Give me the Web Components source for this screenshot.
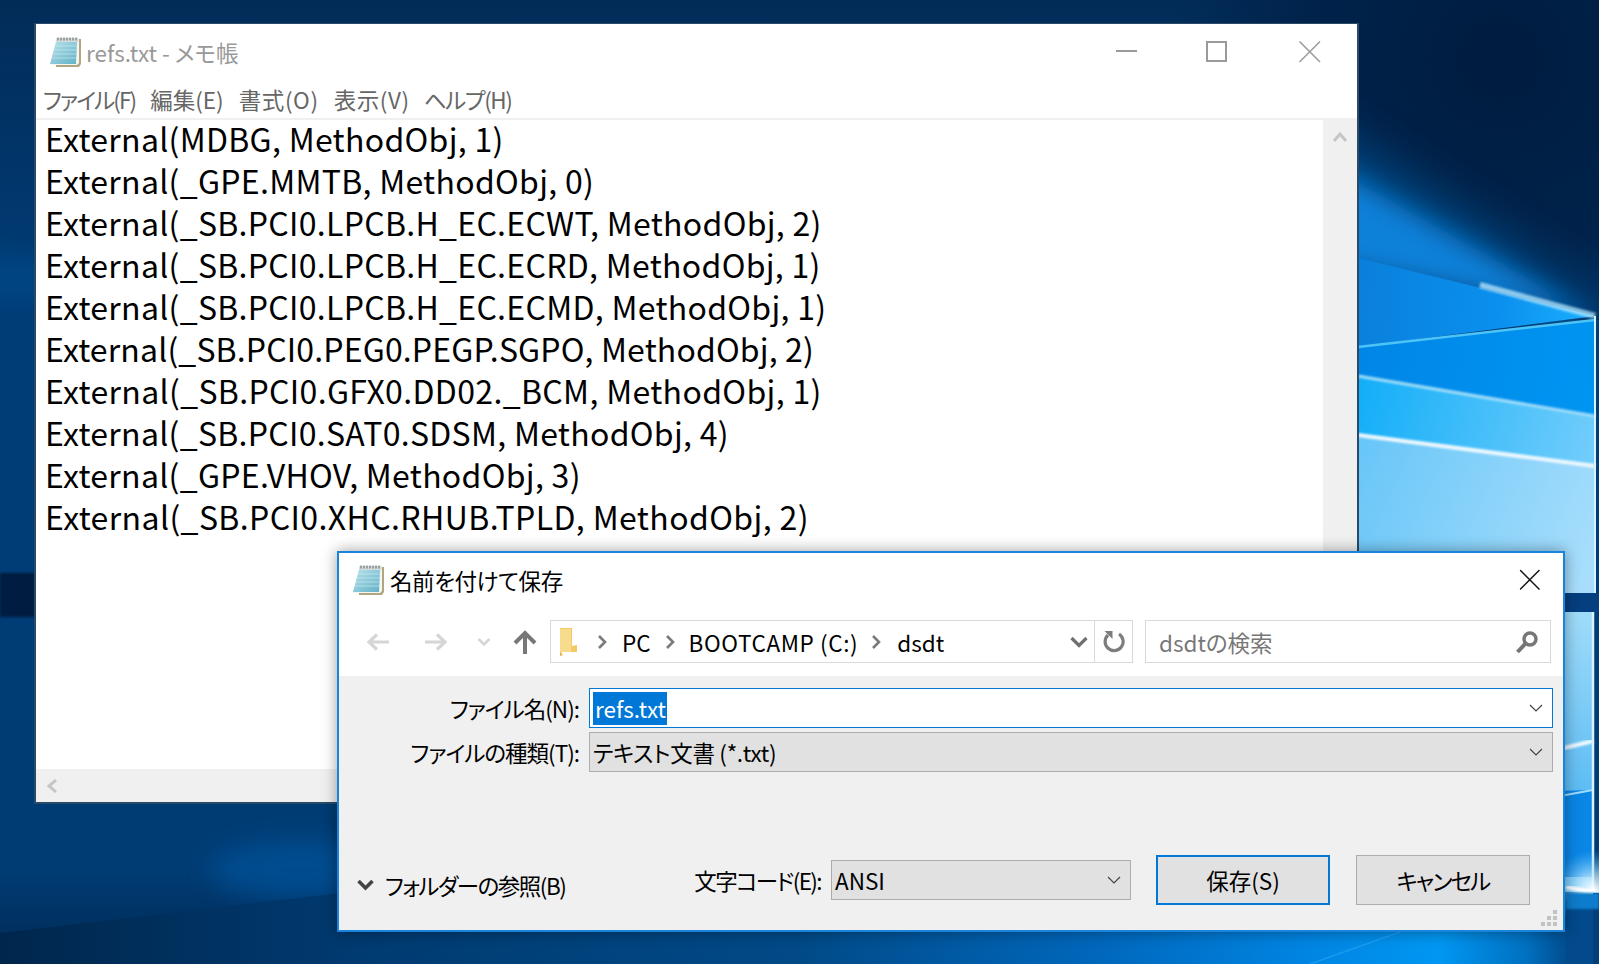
<!DOCTYPE html>
<html lang="ja">
<head>
<meta charset="utf-8">
<title>refs.txt</title>
<style>
  html, body { margin: 0; height: 100%; overflow: hidden; background: #003a72; }
  body { font-family: "Noto Sans CJK JP", "Noto Sans", sans-serif; font-feature-settings: "palt"; }
</style>
</head>
<body>

<hero-desktop>
  <notepad-window slot="windows">
    <code-line>External(MDBG, MethodObj, 1)</code-line>
    <code-line>External(_GPE.MMTB, MethodObj, 0)</code-line>
    <code-line>External(_SB.PCI0.LPCB.H_EC.ECWT, MethodObj, 2)</code-line>
    <code-line>External(_SB.PCI0.LPCB.H_EC.ECRD, MethodObj, 1)</code-line>
    <code-line>External(_SB.PCI0.LPCB.H_EC.ECMD, MethodObj, 1)</code-line>
    <code-line style="letter-spacing:.15px">External(_SB.PCI0.PEG0.PEGP.SGPO, MethodObj, 2)</code-line>
    <code-line style="letter-spacing:.35px">External(_SB.PCI0.GFX0.DD02._BCM, MethodObj, 1)</code-line>
    <code-line>External(_SB.PCI0.SAT0.SDSM, MethodObj, 4)</code-line>
    <code-line>External(_GPE.VHOV, MethodObj, 3)</code-line>
    <code-line style="letter-spacing:.4px">External(_SB.PCI0.XHC.RHUB.TPLD, MethodObj, 2)</code-line>
  </notepad-window>
  <save-dialog slot="windows"></save-dialog>
</hero-desktop>

<script>
  // shared icons
  const noteIcon = `
    <svg width="33" height="32" viewBox="0 0 33 32">
      <defs>
        <linearGradient id="pg" x1="0" y1="0" x2="1" y2="1">
          <stop offset="0" stop-color="#b8e2ea"/><stop offset="1" stop-color="#62b2c8"/>
        </linearGradient>
      </defs>
      <path d="M7 31 L30 31 L32 28 L32 3 L29 3 L29 28 L7 28 Z" fill="#b3a67e"/>
      <path d="M7 3 L30 3 L30 27 L28 29 L1 29 Z" fill="#f4f6f4"/>
      <path d="M7 6 L28 6 L27 28 L1 28 Z" fill="url(#pg)"/>
      <path d="M6 10 H27.5 M5 14 H27.5 M4 18 H27 M3 22 H27" stroke="#d8f0f3" stroke-opacity=".55"/>
      <path d="M7.5 2 H29.5 V6 H7 Z" fill="#d5dadb"/>
      <path d="M9 1.5 v3 M12 1.5 v3 M15 1.5 v3 M18 1.5 v3 M21 1.5 v3 M24 1.5 v3 M27 1.5 v3" stroke="#80898b" stroke-width="1.4"/>
    </svg>`;

  const chevDown = `<svg width="14" height="9" viewBox="0 0 14 9"><path d="M1 1 L7 7 L13 1" fill="none" stroke="#444" stroke-width="1.2"/></svg>`;

  class HeroDesktop extends HTMLElement {
    constructor() {
      super();
      this.attachShadow({ mode: 'open' }).innerHTML = `
        <style>
          :host { display: block; position: relative; width: 1599px; height: 964px; overflow: hidden; }
          svg { display: block; }
        </style>
        <svg width="1599" height="964" viewBox="0 0 1599 964">
          <defs>
            <linearGradient id="base" x1="0" y1="0" x2="0" y2="1">
              <stop offset="0" stop-color="#022c58"/><stop offset=".3" stop-color="#003c76"/>
              <stop offset=".9" stop-color="#003c74"/><stop offset="1" stop-color="#002a55"/>
            </linearGradient>
            <linearGradient id="floor" x1="0" y1="0" x2="1" y2="0">
              <stop offset="0" stop-color="#00264c"/><stop offset=".22" stop-color="#003a70"/>
              <stop offset=".5" stop-color="#014a87"/><stop offset=".69" stop-color="#0068bd"/>
              <stop offset=".81" stop-color="#0083e0"/><stop offset=".9" stop-color="#0097f2"/>
              <stop offset=".955" stop-color="#0070c0"/><stop offset=".98" stop-color="#024d8e"/>
              <stop offset="1" stop-color="#023f78"/>
            </linearGradient>
            <radialGradient id="night" cx="1500" cy="60" r="330" gradientUnits="userSpaceOnUse">
              <stop offset="0" stop-color="#001c3f"/><stop offset=".6" stop-color="#00234b"/>
              <stop offset="1" stop-color="#00234b" stop-opacity="0"/>
            </radialGradient>
            <linearGradient id="paneA" x1="1358" y1="300" x2="1595" y2="316" gradientUnits="userSpaceOnUse">
              <stop offset="0" stop-color="#0a80dc"/><stop offset=".6" stop-color="#0a90ee"/><stop offset="1" stop-color="#1cb0ff"/>
            </linearGradient>
            <linearGradient id="paneB" x1="1358" y1="350" x2="1595" y2="390" gradientUnits="userSpaceOnUse">
              <stop offset="0" stop-color="#0086e6"/><stop offset="1" stop-color="#0095f2"/>
            </linearGradient>
            <linearGradient id="paneC" x1="1358" y1="385" x2="1595" y2="450" gradientUnits="userSpaceOnUse">
              <stop offset="0" stop-color="#12aef8"/><stop offset="1" stop-color="#72cdfb"/>
            </linearGradient>
            <linearGradient id="paneD" x1="1358" y1="450" x2="1595" y2="560" gradientUnits="userSpaceOnUse">
              <stop offset="0" stop-color="#68c6f8"/><stop offset="1" stop-color="#a8defc"/>
            </linearGradient>
            <linearGradient id="paneE" x1="0" y1="612" x2="0" y2="793" gradientUnits="userSpaceOnUse">
              <stop offset="0" stop-color="#a0dcfa"/><stop offset="1" stop-color="#5cbcf4"/>
            </linearGradient>
            <radialGradient id="star" cx="1593" cy="890" r="40" gradientUnits="userSpaceOnUse">
              <stop offset="0" stop-color="#fff"/><stop offset=".4" stop-color="#bfe9ff" stop-opacity=".7"/>
              <stop offset="1" stop-color="#6cc6f8" stop-opacity="0"/>
            </radialGradient>
            <filter id="b30" x="-50%" y="-50%" width="200%" height="200%"><feGaussianBlur stdDeviation="24"/></filter>
            <filter id="b14" x="-50%" y="-50%" width="200%" height="200%"><feGaussianBlur stdDeviation="12"/></filter>
            <filter id="b1"><feGaussianBlur stdDeviation="1"/></filter>
          </defs>
          <rect width="1599" height="964" fill="url(#base)"/>
          <rect x="0" y="573" width="36" height="44" fill="#001c40" filter="url(#b1)"/>
          <path d="M-30 250 L60 262 V300 H-30 Z" fill="#00508f" opacity=".5" filter="url(#b14)"/>
          <ellipse cx="300" cy="870" rx="90" ry="30" fill="#0056a0" opacity=".6" filter="url(#b14)"/>
          <rect x="1100" y="0" width="499" height="320" fill="url(#night)"/>
          <path d="M1300 110 L1599 300 L1300 258 Z" fill="#03508f" opacity=".85" filter="url(#b30)"/>
          <path d="M1300 150 L1599 318 L1300 258 Z" fill="#0a80d8" filter="url(#b14)"/>
          <!-- floor below the dialog -->
          <path d="M0 933 L340 893 L1599 890 V964 H0 Z" fill="url(#floor)"/>
          <path d="M1310 964 L1420 925" stroke="#2aa6f4" stroke-width="1.5" opacity=".6"/>
          <!-- upper panes -->
          <path d="M1358 258 L1595 316 L1358 347 Z" fill="url(#paneA)"/>
          <path d="M1358 347 L1595 320 V416 L1358 376 Z" fill="url(#paneB)"/>
          <path d="M1358 376 L1595 416 V466 L1358 435 Z" fill="url(#paneC)"/>
          <path d="M1358 435 L1595 466 V593 H1358 Z" fill="url(#paneD)"/>
          <path d="M1480 285 L1595 316" stroke="#b6e8ff" stroke-width="6" opacity=".75" filter="url(#b1)"/>
          <path d="M1358 347 L1595 320" stroke="#4cc4f6" stroke-width="2.5"/>
          <path d="M1358 376 L1595 416" stroke="#9edefb" stroke-width="3" filter="url(#b1)"/>
          <path d="M1358 435 L1595 466" stroke="#eef9ff" stroke-width="4" filter="url(#b1)"/>
          <path d="M1595 316 V593" stroke="#d8f2ff" stroke-width="2"/>
          <!-- lower panes, only a sliver shows right of the dialog -->
          <rect x="1358" y="593" width="241" height="19" fill="#053f80"/>
          <rect x="1358" y="612" width="235" height="182" fill="url(#paneE)"/>
          <path d="M1358 796 L1593 790 V877 H1358 Z" fill="#0a86e6"/>
          <path d="M1560 749 L1593 741" stroke="#f2fbff" stroke-width="4" filter="url(#b1)"/>
          <path d="M1560 796 L1593 790" stroke="#9fdcfa" stroke-width="2"/>
          <path d="M1358 877 L1593 877 L1593 892 L1358 892 Z" fill="#6cc4f6"/>
          <path d="M1593 612 V890" stroke="#d8f2ff" stroke-width="2.5"/>
          <rect x="1550" y="850" width="49" height="80" fill="url(#star)"/>
          <path d="M1566 887 L1599 893" stroke="#fff" stroke-width="4" filter="url(#b1)"/>
          <rect x="1566" y="900" width="33" height="64" fill="#024a8c"/>
          <rect x="1593" y="893" width="6" height="71" fill="#023f78"/>
          <rect x="1566" y="893" width="33" height="16" fill="#0d7ccc" filter="url(#b1)"/>
        </svg>
        <slot name="windows"></slot>
      `;
    }
  }

  class CaptionGlyph extends HTMLElement {
    constructor() {
      super();
      const kind = this.getAttribute('kind');
      const d = {
        min: 'M0 10 H21',
        max: 'M1 1 H20 V20 H1 Z',
        close: 'M0.5 0.5 L21 21 M21 0.5 L0.5 21'
      }[kind];
      this.attachShadow({ mode: 'open' }).innerHTML = `
        <style>
          :host { display: block; width: 22px; height: 22px; }
          svg { display: block; }
        </style>
        <svg width="22" height="22" viewBox="0 0 22 22"><path d="${d}" fill="none" stroke="var(--cap, #9a9a9a)" stroke-width="${kind === 'close' ? 1.5 : 2}"/></svg>
      `;
    }
  }

  class CodeLine extends HTMLElement {
    constructor() {
      super();
      this.attachShadow({ mode: 'open' }).innerHTML = `
        <style>
          :host { display: block; height: 42px; line-height: 42px; white-space: nowrap; }
        </style>
        <slot></slot>
      `;
    }
  }

  class NotepadWindow extends HTMLElement {
    constructor() {
      super();
      this.attachShadow({ mode: 'open' }).innerHTML = `
        <style>
          :host {
            position: absolute; left: 34px; top: 23px; width: 1325px; height: 781px;
            display: flex; flex-direction: column; box-sizing: border-box;
            background: #fff; border: 2px solid #2b4a68; border-top-width: 1px;
            font-size: 22.5px; color: #555;
          }
          .title { height: 61px; display: flex; align-items: center; padding: 0 0 6px 13px; box-sizing: border-box; flex: none; }
          .title .name { margin-left: 4px; color: #999; white-space: pre; }
          .title svg { flex: none; }
          .caption { margin-left: auto; display: flex; margin-top: 0; }
          .caption caption-glyph:nth-child(1) { margin-right: 68px; }
          .caption caption-glyph:nth-child(2) { margin-right: 71px; }
          .caption caption-glyph:nth-child(3) { margin-right: 36px; }
          .menu { height: 33px; display: flex; gap: 15px; padding: 0 0 6px 7px; box-sizing: border-box; align-items: center; flex: none; color: #666; }
          .rule { height: 2px; background: #f0f0f0; flex: none; }
          .body { flex: 1; display: flex; min-height: 0; }
          .text { flex: 1; padding-left: 9px; margin-top: -3px; color: #000; font-size: 32px; letter-spacing: 0.3px; }
          .vbar { width: 34px; background: #f0f0f0; display: flex; justify-content: center; padding-top: 12px; box-sizing: border-box; flex: none; }
          .hbar { height: 33px; background: #f0f0f0; flex: none; display: flex; align-items: center; padding-left: 11px; }
          svg { display: block; }
        </style>
        <div class="title">
          ${noteIcon}
          <span class="name">refs.txt - メモ帳</span>
          <div class="caption">
            <caption-glyph kind="min"></caption-glyph>
            <caption-glyph kind="max"></caption-glyph>
            <caption-glyph kind="close"></caption-glyph>
          </div>
        </div>
        <div class="menu">
          <span style="letter-spacing:-1.9px">ファイル(F)</span>
          <span>編集(E)</span>
          <span style="letter-spacing:.6px">書式(O)</span>
          <span style="letter-spacing:.6px">表示(V)</span>
          <span style="letter-spacing:-1.4px;margin-left:-1px">ヘルプ(H)</span>
        </div>
        <div class="rule"></div>
        <div class="body">
          <div class="text"><slot></slot></div>
          <div class="vbar"><svg width="14" height="10" viewBox="0 0 14 10"><path d="M1 9 L7 2 L13 9" fill="none" stroke="#c6c6c6" stroke-width="3"/></svg></div>
        </div>
        <div class="hbar"><svg width="10" height="14" viewBox="0 0 10 14"><path d="M9 1 L2 7 L9 13" fill="none" stroke="#c6c6c6" stroke-width="3"/></svg></div>
      `;
    }
  }

  class AddressBar extends HTMLElement {
    constructor() {
      super();
      const sep = `<svg class="sep" width="10" height="14" viewBox="0 0 10 14"><path d="M2 1 L8 7 L2 13" fill="none" stroke="#7a7a7a" stroke-width="2.6"/></svg>`;
      this.attachShadow({ mode: 'open' }).innerHTML = `
        <style>
          :host {
            flex: none; width: 583px; height: 43px; box-sizing: border-box; display: flex; align-items: center;
            background: #fff; border: 1px solid #d9d9d9; color: #000;
          }
          svg { display: block; flex: none; }
          .folder { margin-left: 7px; }
          .sep { margin: 0 15px 0 20px; }
          .crumb { white-space: nowrap; }
          .crumb + .sep { margin-left: 14px; margin-right: 14px; }
          .wide { letter-spacing: .6px; }
          .wide + .sep { margin-left: 13px; margin-right: 16px; }
          .drop { margin-left: auto; margin-right: 6px; }
          .reload { width: 37px; height: 100%; border-left: 1px solid #d9d9d9; display: flex; align-items: center; justify-content: center; flex: none; }
        </style>
        <svg class="folder" width="19" height="28" viewBox="0 0 19 28">
          <path d="M2 0 H14 V18 L19 17 V24 L4 24 L2 28 Z" fill="#f3c963"/>
          <path d="M2 1 H13 V24 H2 Z" fill="#f7dc8e"/>
          <path d="M2 24 L5 27 L2 28 Z" fill="#e0b450"/>
        </svg>
        ${sep}
        <span class="crumb">PC</span>
        ${sep}
        <span class="crumb wide">BOOTCAMP (C:)</span>
        ${sep}
        <span class="crumb">dsdt</span>
        <svg class="drop" width="18" height="12" viewBox="0 0 18 12"><path d="M1.5 2 L9 9.5 L16.5 2" fill="none" stroke="#707070" stroke-width="3.2"/></svg>
        <div class="reload">
          <svg width="22" height="24" viewBox="0 0 22 24">
            <path d="M5 5 A9 9 0 1 0 16 4" fill="none" stroke="#7d7d7d" stroke-width="3.2"/>
            <path d="M1.5 1 H9.5 V9 Z" fill="#7d7d7d"/>
          </svg>
        </div>
      `;
    }
  }

  class SearchBox extends HTMLElement {
    constructor() {
      super();
      this.attachShadow({ mode: 'open' }).innerHTML = `
        <style>
          :host {
            flex: none; width: 406px; height: 43px; box-sizing: border-box; display: flex; align-items: center;
            background: #fff; border: 1px solid #d9d9d9; color: #777; padding: 0 11px 0 13px;
          }
          svg { margin-left: auto; display: block; }
        </style>
        <span><slot></slot></span>
        <svg width="24" height="24" viewBox="0 0 24 24">
          <circle cx="15" cy="9" r="6" fill="none" stroke="#767676" stroke-width="3.4"/>
          <path d="M10.5 13.5 L2.5 22" stroke="#767676" stroke-width="4"/>
        </svg>
      `;
    }
  }

  class ComboBox extends HTMLElement {
    constructor() {
      super();
      this.attachShadow({ mode: 'open' }).innerHTML = `
        <style>
          :host {
            display: flex; align-items: center; box-sizing: border-box; height: 40px; padding-left: 3px; padding-right: 9px;
            background: #e1e1e1; border: 1px solid #adadad; color: #000; white-space: nowrap;
          }
          :host([edit]) { background: #fff; border-color: #0078d7; }
          .value { flex: 1; }
          svg { display: block; flex: none; }
        </style>
        <span class="value"><slot></slot></span>
        ${chevDown}
      `;
    }
  }

  class FieldRow extends HTMLElement {
    constructor() {
      super();
      this.attachShadow({ mode: 'open' }).innerHTML = `
        <style>
          :host { display: grid; grid-template-columns: 240px 1fr; column-gap: 10px; align-items: center; }
          .label { text-align: right; white-space: nowrap; letter-spacing: -1px; }
        </style>
        <span class="label"><slot name="label"></slot></span>
        <slot></slot>
      `;
    }
  }

  class DlgButton extends HTMLElement {
    constructor() {
      super();
      this.attachShadow({ mode: 'open' }).innerHTML = `
        <style>
          :host {
            display: flex; align-items: center; justify-content: center; box-sizing: border-box;
            width: 174px; height: 50px; background: #e1e1e1; border: 1px solid #adadad; color: #000; flex: none;
          }
          :host([default]) { border: 2px solid #0078d7; }
        </style>
        <slot></slot>
      `;
    }
  }

  class SaveDialog extends HTMLElement {
    constructor() {
      super();
      this.attachShadow({ mode: 'open' }).innerHTML = `
        <style>
          :host {
            position: absolute; left: 337px; top: 551px; width: 1228px; height: 381px; box-sizing: border-box;
            display: flex; flex-direction: column; background: #fff; border: 2px solid #1a84dc;
            box-shadow: 0 0 14px rgba(0,0,0,.38); font-size: 22.5px; color: #000; --cap: #111;
          }
          .head { height: 67px; flex: none; display: flex; align-items: center; padding: 0 0 14px 13px; box-sizing: border-box; }
          .head svg { flex: none; }
          .head .name { margin-left: 5px; letter-spacing: -.4px; }
          .head caption-glyph { margin-left: auto; margin-right: 22px; transform: scale(.95); }
          .nav { flex: none; height: 43px; display: flex; align-items: center; padding-left: 10px; }
          .slot { flex: none; display: flex; align-items: center; justify-content: center; }
          .nav address-bar { margin-left: 3px; }
          .nav search-box { margin-left: 12px; }
          .body {
            margin-top: 13px; flex: 1; background: #f0f0f0; display: flex; flex-direction: column;
            padding: 12px 10px 0 0; position: relative; min-height: 0;
          }
          .rows { display: flex; flex-direction: column; gap: 4px; }
          .sel { display: inline-block; background: #0078d7; color: #fff; padding: 0 1px 0 2px; height: 33px; line-height: 33px; }
          .type { letter-spacing: -.3px; }
          .foot { margin-top: auto; margin-bottom: 25px; margin-right: 23px; display: flex; align-items: center; }
          .toggle { display: flex; align-items: center; margin: 9px 0 0 18px; white-space: nowrap; letter-spacing: -1.5px; }
          .toggle svg { margin-right: 11px; display: block; }
          .coding { margin-left: auto; white-space: nowrap; letter-spacing: -1.6px; }
          .foot combo-box { width: 300px; margin-left: 10px; flex: none; }
          .foot dlg-button[default] { margin-left: 25px; }
          .foot dlg-button:last-child { margin-left: 26px; letter-spacing: -1.8px; }
          .grip { position: absolute; right: 6px; bottom: 4px; }
          svg { display: block; }
        </style>
        <div class="head">
          ${noteIcon}
          <span class="name">名前を付けて保存</span>
          <caption-glyph kind="close"></caption-glyph>
        </div>
        <div class="nav">
          <div class="slot" style="width:58px">
            <svg width="24" height="18" viewBox="0 0 24 18"><path d="M23 9 H3 M11 1.5 L3 9 L11 16.5" fill="none" stroke="#d6d6d6" stroke-width="3.2"/></svg>
          </div>
          <div class="slot" style="width:58px">
            <svg width="24" height="18" viewBox="0 0 24 18"><path d="M1 9 H21 M13 1.5 L21 9 L13 16.5" fill="none" stroke="#d6d6d6" stroke-width="3.2"/></svg>
          </div>
          <div class="slot" style="width:38px">
            <svg width="14" height="10" viewBox="0 0 14 10"><path d="M1.5 2 L7 7.5 L12.5 2" fill="none" stroke="#d6d6d6" stroke-width="2.6"/></svg>
          </div>
          <div class="slot" style="width:44px">
            <svg width="24" height="24" viewBox="0 0 24 24"><path d="M12 24 V4 M2 13 L12 3 L22 13" fill="none" stroke="#777" stroke-width="4"/></svg>
          </div>
          <address-bar></address-bar>
          <search-box>dsdtの検索</search-box>
        </div>
        <div class="body">
          <div class="rows">
            <field-row>
              <span slot="label">ファイル名(N):</span>
              <combo-box edit><span class="sel">refs.txt</span></combo-box>
            </field-row>
            <field-row>
              <span slot="label">ファイルの種類(T):</span>
              <combo-box><span class="type">テキスト文書 (*.txt)</span></combo-box>
            </field-row>
          </div>
          <div class="foot">
            <div class="toggle">
              <svg width="17" height="12" viewBox="0 0 17 12"><path d="M1.5 2 L8.5 9 L15.5 2" fill="none" stroke="#444" stroke-width="3.6"/></svg>
              <span>フォルダーの参照(B)</span>
            </div>
            <span class="coding">文字コード(E):</span>
            <combo-box>ANSI</combo-box>
            <dlg-button default>保存(S)</dlg-button>
            <dlg-button>キャンセル</dlg-button>
          </div>
          <svg class="grip" width="16" height="16" viewBox="0 0 16 16" fill="#c2c2c2">
            <rect x="12" y="0" width="4" height="4"/><rect x="6" y="6" width="4" height="4"/><rect x="12" y="6" width="4" height="4"/>
            <rect x="0" y="12" width="4" height="4"/><rect x="6" y="12" width="4" height="4"/><rect x="12" y="12" width="4" height="4"/>
          </svg>
        </div>
      `;
    }
  }

  customElements.define('caption-glyph', CaptionGlyph);
  customElements.define('code-line', CodeLine);
  customElements.define('combo-box', ComboBox);
  customElements.define('field-row', FieldRow);
  customElements.define('dlg-button', DlgButton);
  customElements.define('address-bar', AddressBar);
  customElements.define('search-box', SearchBox);
  customElements.define('notepad-window', NotepadWindow);
  customElements.define('save-dialog', SaveDialog);
  customElements.define('hero-desktop', HeroDesktop);
</script>
</body>
</html>
